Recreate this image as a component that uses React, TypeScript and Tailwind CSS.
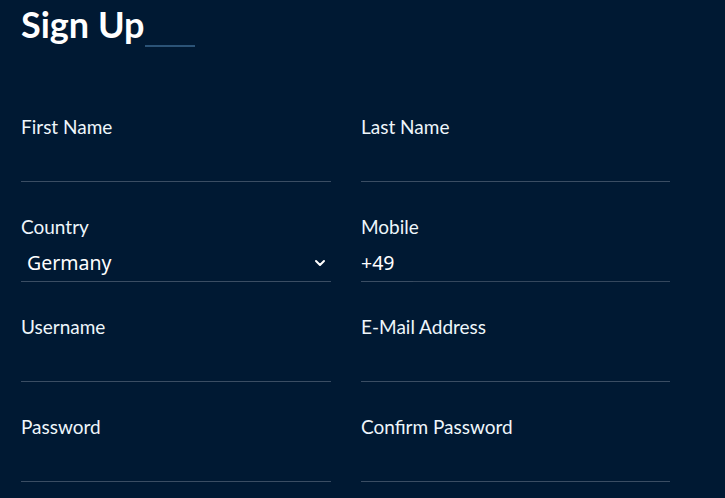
import { ChevronDown } from 'lucide-react';

const label = "block h-6 text-[19px] leading-6 text-[#eef6fb]";
const line = 'border-b border-[#3a4d63]';

function Field({ name }: { name: string }) {
  return (
    <div className="flex h-[100px] flex-col pt-[33px]">
      <span className={label}>{name}</span>
      <div className={`h-[43px] ${line}`} />
    </div>
  );
}

export default function App() {
  return (
    <div className="min-h-[498px] w-full bg-[#001933] px-[21px]" style={{ fontFamily: 'Lato, sans-serif' }}>
      <div className="flex h-[82px] items-start">
        <h1 className="mt-[4px] text-[36px] font-bold leading-10 text-white">Sign Up</h1>
        <div className="ml-[1px] mt-[45px] h-[2px] w-[50px] bg-[#2b5377]" />
      </div>

      <div className="grid w-[649px] grid-cols-[310px_309px] gap-x-[30px]">
        <Field name="First Name" />
        <Field name="Last Name" />

        <div className="flex h-[100px] flex-col pt-[33px]">
          <span className={label}>Country</span>
          <div className={`flex h-[43px] items-center justify-between pl-[6px] pr-[3px] pt-[6px] ${line}`}>
            <span className="text-[19.5px] text-white" style={{ fontFamily: '"Noto Sans", sans-serif' }}>Germany</span>
            <ChevronDown className="h-[16px] w-[16px] text-white" strokeWidth={3} />
          </div>
        </div>

        <div className="flex h-[100px] flex-col pt-[33px]">
          <span className={label}>Mobile</span>
          <div className="flex h-[43px]">
            <div className={`flex w-[52px] items-center pt-[6px] ${line}`}>
              <span className="text-[19.5px] text-white" style={{ fontFamily: '"Noto Sans", sans-serif' }}>+49</span>
            </div>
            <div className={`flex-1 ${line} border-[#34475d]`} />
          </div>
        </div>

        <Field name="Username" />
        <Field name="E-Mail Address" />
        <Field name="Password" />
        <Field name="Confirm Password" />
      </div>
    </div>
  );
}
